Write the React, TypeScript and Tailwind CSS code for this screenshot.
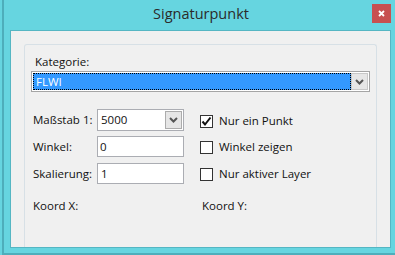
import React from "react";

const font = { fontFamily: '"Open Sans", "Noto Sans", Arial, sans-serif' };

function Chevron() {
  return (
    <svg width="9" height="6" viewBox="0 0 9 6">
      <path d="M1 1 L4.5 4.5 L8 1" fill="none" stroke="#555" strokeWidth="2" />
    </svg>
  );
}

function Checkbox({ checked, label }: { checked?: boolean; label: string }) {
  return (
    <div className="flex items-center">
      <div className="w-[13px] h-[13px] border border-[#333333] bg-white flex items-center justify-center">
        {checked && (
          <svg width="11" height="11" viewBox="0 0 11 11">
            <path d="M1.5 5.5 L4 8.5 L9.5 1.5" fill="none" stroke="#111" strokeWidth="2" />
          </svg>
        )}
      </div>
      <span className="ml-[6px] text-[11.5px] leading-[16px] text-[#111]">{label}</span>
    </div>
  );
}

export default function App() {
  return (
    <div className="w-[395px] h-[255px] bg-[#66d5e0] overflow-hidden" style={font}>
      <div className="ml-[2px] w-[393px] h-[255px] border-l-2 border-b-2 border-[#4eaebb] flex flex-col">
        {/* title bar */}
        <div className="h-[30px] flex items-center shrink-0">
          <div className="flex-1 pl-[26px] text-center text-[14.5px] text-[#2b2b2b] leading-[20px] pb-[2px]">
            Signaturpunkt
          </div>
          <div className="w-[19px] h-[19px] bg-[#c75050] mr-[4px] mb-[3px] flex items-center justify-center">
            <svg width="7" height="7" viewBox="0 0 7 7">
              <path d="M1 1 L6 6 M6 1 L1 6" stroke="#fff" strokeWidth="1.8" />
            </svg>
          </div>
        </div>
        {/* client */}
        <div className="ml-[6px] w-[381px] h-[218px] border border-[#55b6c3] bg-[#f0f0f0] flex flex-col overflow-hidden">
          <div className="mt-[13px] mx-[13px] flex-1 border-t border-x border-[#d7e0e6] rounded-t-[3px] flex flex-col text-[11.5px] leading-[16px] text-[#111]">
            <div className="mt-[9px] pl-[10px]">Kategorie:</div>
            <div className="mt-[1px] ml-[6px] w-[339px] h-[21px] border border-[#a5a5a5] bg-white flex p-[1px]">
              <div className="flex-1 bg-[#3399ff] border border-dotted border-black text-white flex items-center pl-[2px]">
                FLWI
              </div>
              <div className="w-[17px] bg-[#e6e6e6] border border-[#c8c8c8] flex items-center justify-center">
                <Chevron />
              </div>
            </div>
            <div className="mt-[14px] grid grid-cols-[175px_1fr] grid-rows-[27px_27px_27px] items-center">
              <div className="flex items-center pl-[8px]">
                <span className="w-[64px]">Maßstab 1:</span>
                <div className="w-[87px] h-[22px] border border-[#abadb3] bg-white flex items-center pl-[3px] pr-[1px]">
                  <span className="flex-1">5000</span>
                  <div className="w-[17px] h-[18px] bg-[#e6e6e6] border border-[#acacac] flex items-center justify-center">
                    <Chevron />
                  </div>
                </div>
              </div>
              <div className="pt-[3px]"><Checkbox checked label="Nur ein Punkt" /></div>
              <div className="flex items-center pl-[8px]">
                <span className="w-[64px]">Winkel:</span>
                <div className="w-[87px] h-[21px] border border-[#abadb3] bg-white flex items-center pl-[2px]">0</div>
              </div>
              <div className="pt-[1px]"><Checkbox label="Winkel zeigen" /></div>
              <div className="flex items-center pl-[8px]">
                <span className="w-[64px]">Skalierung:</span>
                <div className="w-[87px] h-[21px] border border-[#abadb3] bg-white flex items-center pl-[3px]">1</div>
              </div>
              <div className="pt-[1px]"><Checkbox label="Nur aktiver Layer" /></div>
            </div>
            <div className="mt-[11px] grid grid-cols-[177px_1fr]">
              <span className="pl-[8px]">Koord X:</span>
              <span>Koord Y:</span>
            </div>
          </div>
        </div>
      </div>
    </div>
  );
}
